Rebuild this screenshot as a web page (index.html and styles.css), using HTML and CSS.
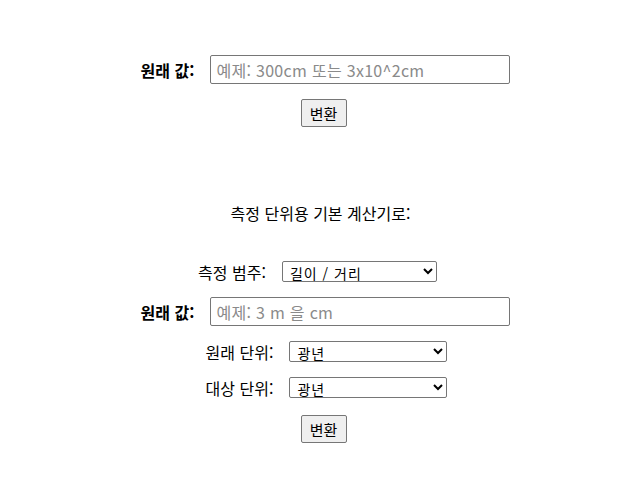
FILE: index.html
```html
<!DOCTYPE html>
<html lang="ko">
<head>
  <meta charset="UTF-8" />
  <title>단위 변환기</title>
  <link rel="stylesheet" href="styles.css">
</head>
<body>
  <div class="quick">
    <div class="row value-row">
      <label class="bold" for="quickValue">원래 값:</label>
      <input type="text" id="quickValue" placeholder="예제: 300cm 또는 3x10^2cm">
    </div>
    <button>변환</button>
  </div>

  <div class="basic">
    <div class="title">측정 단위용 기본 계산기로:</div>

    <div class="row cat-row">
      <label for="category">측정 범주:</label>
      <select id="category" class="cat">
        <option>길이 / 거리</option>
        <option>무게</option>
        <option>부피</option>
      </select>
    </div>

    <div class="row value-row">
      <label class="bold" for="value">원래 값:</label>
      <input type="text" id="value" placeholder="예제: 3 m 을 cm">
    </div>

    <div class="row unit-row">
      <label for="fromUnit">원래 단위:</label>
      <select id="fromUnit" class="unit">
        <option>광년</option>
        <option>킬로미터</option>
        <option>미터</option>
      </select>
    </div>

    <div class="row unit-row">
      <label for="toUnit">대상 단위:</label>
      <select id="toUnit" class="unit">
        <option>광년</option>
        <option>킬로미터</option>
        <option>미터</option>
      </select>
    </div>

    <button>변환</button>
  </div>
</body>
</html>
```

FILE: styles.css
```css
body {
  margin: 0;
  font-family: "Noto Sans CJK KR", sans-serif;
  font-size: 16px;
  line-height: 20px;
  color: #000;
  background: #fff;
  text-align: center;
}

.quick {
  padding-top: 55px;
}

.row {
  display: flex;
  justify-content: center;
  align-items: center;
}

.value-row {
  padding-left: 10px;
}

.cat-row {
  padding-right: 6px;
}

.unit-row {
  padding-left: 12px;
}

.row label {
  margin-right: 16px;
}

.bold {
  font-weight: bold;
}

input[type="text"] {
  width: 300px;
  height: 29px;
  box-sizing: border-box;
  padding: 0 5px;
  font-family: "Noto Sans CJK KR", sans-serif;
  font-size: 16px;
  letter-spacing: 0.3px;
  border: 1px solid #767676;
  border-radius: 2px;
}

input::placeholder {
  color: #8a8a8a;
}

select {
  height: 21px;
  padding: 0 3px;
  font-family: "Noto Sans CJK KR", sans-serif;
  font-size: 14px;
  letter-spacing: 1px;
  line-height: 1;
  border: 1px solid #767676;
  border-radius: 2px;
  background: #fff;
}

.cat {
  width: 155px;
}

.unit {
  width: 158px;
}

button {
  margin-top: 15px;
  margin-left: 6px;
  width: 46px;
  height: 28px;
  padding: 0;
  font-family: "Noto Sans CJK KR", sans-serif;
  font-size: 15px;
  background: #efefef;
  border: 1px solid #767676;
  border-radius: 2px;
}

.basic {
  margin-top: 76px;
}

.title {
  margin-bottom: 38px;
}

.basic .row + .row {
  margin-top: 15px;
}

.basic button {
  margin-top: 17px;
}
```
